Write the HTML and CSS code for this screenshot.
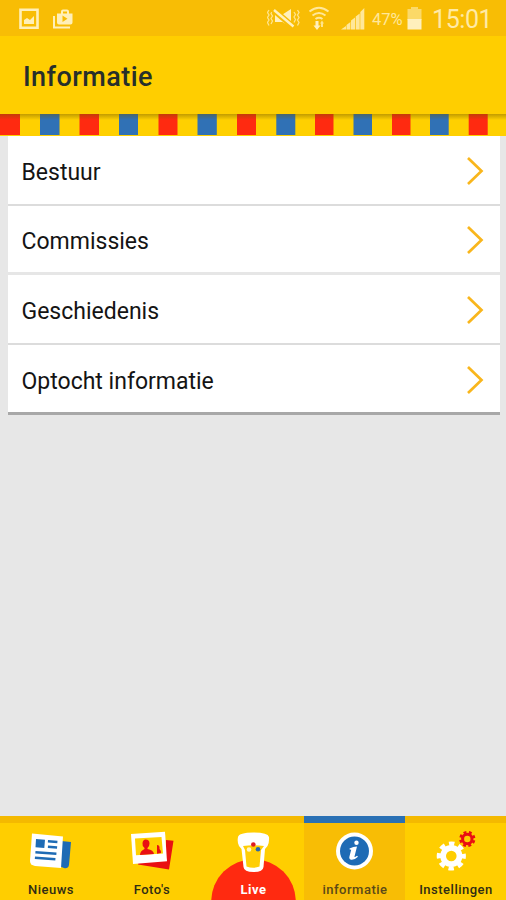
FILE: index.html
```html
<!DOCTYPE html>
<html lang="nl">
<head>
<meta charset="utf-8">
<title>Informatie</title>
<link rel="stylesheet" href="styles.css">
</head>
<body>
<div class="status">
  <svg class="status-left" width="60" height="36" viewBox="0 0 60 36">
    <path fill="none" stroke="#ffefb8" stroke-width="2.6" d="M1.500 9.800h17v18h-17z"/>
    <path fill="#ffefb8" d="M5 24v-4l3-2 3 2 4-4v8z"/>
    <path fill="none" stroke="#ffefb8" stroke-width="2" d="M35 16v11.500h16M43 14v-2.500q0-1 1-1h4q1 0 1 1v2.500"/>
    <path fill="#ffefb8" fill-rule="evenodd" d="M38 13.500h15.500v9q0 2-2 2H40q-2 0-2-2zM43.500 15.500v6.500l5-3.200z"/>
  </svg>
  <svg class="status-icons" width="98" height="36" viewBox="267 0 98 36">
    <g fill="none" stroke="#ffe48c" stroke-width="1.3">
      <path d="M269 10l-1.500 2.500 1.500 2.500-1.500 2.500 1.500 2.500-1.500 2.500 1.500 3M272.500 11l-1.500 2.500 1.500 2.500-1.500 2.500 1.500 2.500-1.500 3M297.500 10l1.500 2.500-1.500 2.500 1.500 2.500-1.500 2.500 1.500 2.500-1.500 3M294 12l1.500 2.500-1.500 2.500 1.500 2.500-1.500 3"/>
    </g>
    <path fill="#fff0bd" d="M275 14.500h7.500L291 9v18l-8.500-5H275z"/>
    <path stroke="#f8bd05" stroke-width="6" d="M272 8.500l22 19"/>
    <path stroke="#fff0bd" stroke-width="2.400" d="M274 10l19.500 16.500"/>
    <g fill="none" stroke="#ffe79a" stroke-width="2">
      <path d="M309.500 11.500q9.500-7.500 19 0M312.500 15.500q6.500-5 13 0M315.500 19q3.500-2.500 7 0"/>
    </g>
    <path fill="#fff0bd" d="M313.500 25.500h2v-4.500h3v4.500h2l-3.500 4.500z"/>
    <path fill="#ffe48c" d="M321 27v-3.500h-1l2-3 2 3h-1v3.500z"/>
    <path fill="#ffe79a" d="M341 29.500l5-3.500v3.500zM346.500 25l3.900-3v7.500h-3.900zM351 20.500l4-3v12h-4zM355.700 16.500l4-3v16h-4zM360.300 12l4-4v21.500h-4z"/>
  </svg>
  <span class="percent">47%</span>
  <svg class="battery" width="15" height="36" viewBox="0 0 15 36">
    <path fill="#fbd968" d="M.5 9H4V7h7v2h3.500v11H.5z"/><path fill="#fff0bd" d="M.5 19h14v10.500H.5z"/>
  </svg>
  <time class="clock">15:01</time>
</div>
<header class="header"><h1>Informatie</h1></header>
<svg class="stripes" width="506" height="22" viewBox="0 0 506 22">
  <defs><linearGradient id="shade" x2="0" y2="1"><stop stop-color="#6e5400" stop-opacity=".42"/><stop offset="1" stop-color="#6e5400" stop-opacity="0"/></linearGradient></defs>
  <path fill="#ff2a10" d="M0 0h20v21H0zM79.500 0H99v21H79.500zM158.500 0h19v21h-19zM237 0h19v21h-19zM315 0h18.500v21H315zM392 0h18.500v21H392zM468.700 0h19v21h-19z"/>
  <path fill="#3071b5" d="M40 0h19.500v21H40zM119 0h19v21h-19zM197.500 0h19.300v21h-19.300zM276.300 0h19v21h-19zM353.500 0h18.500v21h-18.500zM430 0h18.700v21H430z"/>
  <path fill="url(#shade)" d="M0 0h506v6H0z"/>
</svg>
<main class="content">
  <ul class="list">
    <li><span>Bestuur</span><svg class="chevron" viewBox="0 0 18 30"><path d="M2 2l13.500 13L2 28"/></svg></li>
    <li><span>Commissies</span><svg class="chevron" viewBox="0 0 18 30"><path d="M2 2l13.500 13L2 28"/></svg></li>
    <li><span>Geschiedenis</span><svg class="chevron" viewBox="0 0 18 30"><path d="M2 2l13.500 13L2 28"/></svg></li>
    <li><span>Optocht informatie</span><svg class="chevron" viewBox="0 0 18 30"><path d="M2 2l13.500 13L2 28"/></svg></li>
  </ul>
</main>
<nav class="tabs">
  <a class="tab"><svg viewBox="0 816 101 84">
    <path fill="#1e6bb5" d="M61 841l10 1-2 23q-1 4-5 3l-5-2z"/>
    <path fill="#fff" d="M32 833.500l31 3-2 31.500-26-2q-5-1-5-5z"/>
    <path fill="#1e6bb5" d="M36 839l9 .8-.7 8.200-8.800-.8zM48 840l9.500.8-.2 2.400-9.500-.8zM48 845.500l9.200.8-.2 2.400-9.200-.8zM35.500 851l21 1.500-.2 2.400-21-1.500zM35 856.500l20.500 1.500-.2 2.400-20.500-1.500z"/>
  </svg><span>Nieuws</span></a>
  <a class="tab"><svg viewBox="101 816 101 84">
    <path fill="#e90f12" d="M166 840l7.500.7-4.500 28.800-31-5 1-4 27-2z"/>
    <path fill="#fff" d="M131 834l34-2.300 2 29.500-34 2.800z"/>
    <path fill="#ffd000" d="M135 838.500l26.500-1.500 1.500 16.500-27 1.700z"/>
    <path fill="#e90f12" d="M145.500 839.500q4 0 4 4 0 3-2 4.500v1q6 1 6.500 5l-14 1q0-4 4.500-6v-1q-2.500-2-2-5 .5-3.500 3-3.500zM157 845q3 0 2.500 4 2 2 1.500 4l-4 .7z"/>
  </svg><span>Foto's</span></a>
  <a class="tab live"><svg viewBox="202 816 102 84">
    <circle cx="253.500" cy="901.500" r="42.300" fill="#ff2a10"/>
    <path fill="#fff" d="M238 837q1-4.500 15.500-4.500T269 837q.5 5-1.500 9l-2.500 3-1.500 18q-.5 5-10 5t-10-5l-2-18-2.500-3q-2-4-1-9z"/>
    <path fill="#ffce05" d="M243 846q10.500-1.500 21 0l-3 4-1.500 16.500q-6 2.500-13 0L245 850z"/>
    <circle cx="249" cy="849.500" r="2.300" fill="#fff6c9"/><circle cx="253.300" cy="844.500" r="2.300" fill="#df1c22"/><circle cx="258" cy="849.300" r="2.300" fill="#2868ae"/>
  </svg><span>Live</span></a>
  <a class="tab active"><svg viewBox="304 816 101 84">
    <circle cx="354.500" cy="851" r="18.500" fill="#fff"/><circle cx="354.500" cy="851" r="14.500" fill="#1e6bb5"/>
    <circle cx="356.500" cy="842.800" r="2.200" fill="#fff"/>
    <path fill="#fff" d="M349.500 848.500q4-2 7.500-2l-2.500 10q-.3 1.500 2.500-.8l1 1q-4 3.700-7 3-2.300-.6-1.500-3.500l1.700-6.500-1.500-.2z"/>
  </svg><span>informatie</span></a>
  <a class="tab"><svg viewBox="405 816 101 84">
    <g fill="none" stroke="#fff"><circle cx="451.300" cy="856" r="8.200" stroke-width="5.800"/><circle cx="451.300" cy="856" r="12.500" stroke-width="4.200" stroke-dasharray="5.400 4.417" stroke-dashoffset="2.700"/></g>
    <g fill="none" stroke="#e90f12"><circle cx="467.300" cy="839" r="4.700" stroke-width="3"/><circle cx="467.300" cy="839" r="6.800" stroke-width="2.600" stroke-dasharray="2.900 2.441" stroke-dashoffset="4"/></g>
  </svg><span>Instellingen</span></a>
</nav>
</body>
</html>
```
FILE: styles.css
```css
* { box-sizing: border-box; }
body {
  margin: 0;
  width: 506px;
  height: 900px;
  overflow: hidden;
  display: flex;
  flex-direction: column;
  background: #e7e7e7;
  font-family: Roboto, "Liberation Sans", sans-serif;
}
svg { display: block; flex: none; }
.status {
  height: 36px;
  flex: none;
  display: flex;
  align-items: center;
  padding-left: 19px;
  background: #f8bd05;
  color: #ffe79a;
}
.status-icons { margin-left: 188px; }
.percent { width: 34px; margin-left: 7px; font-size: 16.5px; line-height: 36px; padding-top: 3px; }
.battery { margin-left: 1px; }
.clock { margin-left: 10px; font-size: 25px; letter-spacing: -0.4px; line-height: 36px; padding-top: 3px; color: #ffeaa6; }
.header {
  height: 78px;
  flex: none;
  background: #ffce00;
  display: flex;
  align-items: center;
  padding: 3px 0 0 23px;
}
h1 { margin: 0; font-size: 27px; letter-spacing: 0.45px; font-weight: 500; color: #272f2b; }
.stripes { background: #ffd000; height: 22px; }
.content { flex: 1; padding: 0 6px 0 7.5px; }
.list {
  list-style: none;
  margin: 0;
  padding: 0;
  height: 279px;
  background: #fff;
  border-bottom: 3px solid #a8a8a8;
}
.list li {
  height: 69.7px;
  padding: 2px 16px 0 14px;
  border-bottom: 2px solid #dcdcdc;
  display: flex;
  align-items: center;
  justify-content: space-between;
  font-size: 23px;
  color: #141414;
}
.list li:nth-child(2) { border-bottom: 3px solid #e6e6e6; }
.list li:last-child { border-bottom: 0; height: 68px; }
.list span { padding-top: 3px; }
.chevron { width: 18px; height: 30px; fill: none; stroke: #f9b61c; stroke-width: 2.7; }
.tabs {
  height: 84px;
  flex: none;
  display: grid;
  grid-template-columns: 101px 101px 102px 101px 101px;
  background: #ffce00;
}
.tab {
  display: grid;
  justify-items: center;
  align-items: end;
  border-top: 7px solid #f4b900;
  font-size: 13px;
  letter-spacing: 0.5px;
  font-weight: 500;
  color: #302d14;
}
.tab > * { grid-area: 1 / 1; }
.tab svg { width: 100%; height: 84px; margin-top: -7px; }
.tab span { line-height: 15px; padding: 0 0 3px 1px; }
.active { background: #f8bd05; border-top-color: #2a70b4; color: #5b4918; }
.live span { color: #fff; font-weight: 700; }
```
